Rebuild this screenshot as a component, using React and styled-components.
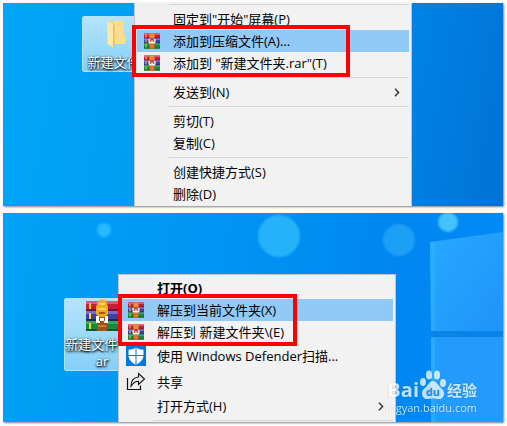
import React from "react";
import styled, { createGlobalStyle } from "styled-components";

export default function App() {
  return (
    <>
      <GlobalStyle />
      <Page>
        <Desktop $height={203}>
          <Shortcut $left={79} $top={13}>
            <ShortcutIcon>
              <FolderIcon />
            </ShortcutIcon>
            <ShortcutLabel>新建文件夹</ShortcutLabel>
          </Shortcut>
          <Menu role="menu" $left={131} $top={-5}>
            <Separator />
            <MenuItem label='固定到"开始"屏幕(P)' />
            <Marked $width={218} $offset={-5}>
              <MenuItem label="添加到压缩文件(A)..." icon={<RarIcon />} active />
              <MenuItem label='添加到 "新建文件夹.rar"(T)' icon={<RarIcon />} />
            </Marked>
            <Separator />
            <MenuItem label="发送到(N)" submenu />
            <Separator />
            <MenuItem label="剪切(T)" />
            <MenuItem label="复制(C)" />
            <Separator />
            <MenuItem label="创建快捷方式(S)" />
            <MenuItem label="删除(D)" />
            <Separator />
          </Menu>
        </Desktop>

        <Desktop $height={209}>
          <Wallpaper />
          <Shortcut $left={61} $top={85}>
            <ShortcutIcon>
              <RarIcon size={32} zipper />
            </ShortcutIcon>
            <ShortcutLabel>
              <span>新建文件夹.r</span>
              <span>ar</span>
            </ShortcutLabel>
          </Shortcut>
          <Menu role="menu" $left={115} $top={61}>
            <MenuItem label="打开(O)" bold />
            <Marked $width={179} $offset={-3}>
              <MenuItem label="解压到当前文件夹(X)" icon={<RarIcon />} active />
              <MenuItem label="解压到 新建文件夹\(E)" icon={<RarIcon />} />
            </Marked>
            <MenuItem
              label="使用 Windows Defender扫描..."
              icon={<DefenderIcon />}
              tall
            />
            <MenuItem label="共享" icon={<ShareIcon />} tall />
            <MenuItem label="打开方式(H)" submenu />
            <Separator />
          </Menu>
          <Watermark>
            <Brand>
              <span>Bai</span>
              <PawIcon />
              <small>经验</small>
            </Brand>
            <Site>jingyan.baidu.com</Site>
          </Watermark>
        </Desktop>
      </Page>
    </>
  );
}

function MenuItem({ label, icon, active, bold, tall, submenu }) {
  return (
    <Item role="menuitem" type="button" $active={active} $bold={bold} $tall={tall}>
      <Gutter>{icon}</Gutter>
      <Label>{label}</Label>
      {submenu && (
        <svg width="6" height="9" viewBox="0 0 6 9" fill="none">
          <path d="M1 .8 4.6 4.5 1 8.2" stroke="#333" strokeWidth="1.4" />
        </svg>
      )}
    </Item>
  );
}

function FolderIcon() {
  return (
    <svg width="32" height="32" viewBox="0 0 32 32">
      <path d="M4 3h15.500v13l2 2v8H9z" fill="#f3cf72" />
      <path d="M10 3h9.500v13l2 2v8H10z" fill="#fbdd8c" />
      <path d="M3.500 3 10 6v24l-6.500-4z" fill="#ffe9a6" />
      <path d="M9 7v23l1.500-1V6z" fill="#e6bd5c" />
    </svg>
  );
}

function RarIcon({ size = 16, zipper }) {
  return (
    <svg width={size} height={size} viewBox="0 0 32 32">
      <rect y="1" width="32" height="10" fill="#c41e3f" />
      <rect y="1" width="32" height="3" fill="#e0566e" />
      <rect y="9" width="32" height="2" fill="#7c1029" />
      <rect y="11" width="32" height="10" fill="#4340a3" />
      <rect y="11" width="32" height="3" fill="#6d70cf" />
      <rect y="19" width="32" height="2" fill="#262261" />
      <rect y="21" width="32" height="10" fill="#168a43" />
      <rect y="21" width="32" height="3" fill="#35a955" />
      <rect y="29" width="32" height="2" fill="#0b5a2a" />
      <path d="M3 3h2v6H3zm0 10h2v6H3zm0 10h2v6H3z" fill="#ffd51f" />
      {zipper ? (
        <>
          <rect x="11" y="1" width="10" height="30" fill="#a34f16" />
          <path d="M13 0h6l2 2v3l1 1v8l-3 3h-6l-3-3V6l1-1V2z" fill="#f2a91e" />
          <path d="M13 3h6v2h-6zm-1 5h8v2h-8z" fill="#ffdc64" />
          <path d="M13 12h6v2h-6z" fill="#9a5a10" />
          <path d="M10 16h3v5h1v-3h4v3h1v-5h3v7h-4v-2h-4v2h-4z" fill="#fff" />
          <path d="M12 25h8v2h-8z" fill="#cf7832" />
        </>
      ) : (
        <>
          <rect x="11" y="1" width="10" height="30" fill="#d95a20" />
          <rect x="11" y="1" width="10" height="9" fill="#f28a34" />
          <path d="M9 12h2.500v6h3v-4h3v4h3v-6H23v7l-2 2H11l-2-2z" fill="#fff" />
          <path d="M14 10h4v5h-4z" fill="#a34a50" />
          <rect x="12" y="23" width="8" height="8" fill="#e9702c" />
        </>
      )}
    </svg>
  );
}

function DefenderIcon() {
  return (
    <svg width="20" height="20" viewBox="0 0 20 20">
      <rect width="20" height="20" fill="#0078d7" />
      <path
        d="M10 1.500c2.200 1.700 4.800 2.200 7.500 2.200v5.300c0 4.600-3.200 7.600-7.500 9.800-4.300-2.200-7.500-5.200-7.500-9.800V3.700c2.700 0 5.300-.5 7.500-2.200z"
        fill="#fff"
      />
      <path d="M9.500 1h1v18h-1zM2 9h16v1H2z" fill="#0078d7" />
    </svg>
  );
}

function ShareIcon() {
  return (
    <svg width="20" height="20" viewBox="0 0 20 20" fill="none" stroke="#111">
      <path d="M1.500 6v11.500h13v-4" strokeWidth="1.200" />
      <path
        d="M12.500 1.500 18.500 7l-6 5.500v-3.200c-3.500 0-5.500 1.500-7.500 5 0-5 2.500-8.800 7.500-9.300z"
        strokeWidth="1.100"
      />
    </svg>
  );
}

function PawIcon() {
  return (
    <svg width="28" height="30" viewBox="0 0 28 30" fill="#fff">
      <ellipse cx="4" cy="12" rx="3" ry="4" />
      <ellipse cx="10" cy="5" rx="3" ry="4.500" />
      <ellipse cx="18" cy="5" rx="3" ry="4.500" />
      <ellipse cx="24" cy="13" rx="3" ry="4" />
      <path d="M14 11c3 0 4.500 3 6.500 5.500 2 2.200 4.500 3.500 4.500 7 0 3.500-2.500 5.500-5 5.500-2 0-3.500-.8-6-.8s-4 .8-6 .8c-2.500 0-5-2-5-5.500s2.500-4.800 4.500-7C9.500 14 11 11 14 11z" />
      <text
        x="14"
        y="26"
        textAnchor="middle"
        fontFamily="Open Sans, sans-serif"
        fontWeight="700"
        fontSize="11"
        fill="#1a8cec"
      >
        du
      </text>
    </svg>
  );
}

function Wallpaper() {
  return (
    <Backdrop viewBox="0 0 500 209" preserveAspectRatio="xMidYMid slice">
      <defs>
        <linearGradient id="pane" x1="0" y1="0" x2="1" y2="1">
          <stop offset="0" stopColor="#27a8ff" />
          <stop offset="1" stopColor="#1e94fa" />
        </linearGradient>
        <filter id="soft">
          <feGaussianBlur stdDeviation="1.200" />
        </filter>
      </defs>
      <g filter="url(#soft)">
        <circle cx="101" cy="17" r="7" fill="#25baff" />
        <circle cx="276" cy="23" r="21" fill="#27b2fa" />
        <circle cx="396" cy="27" r="16" fill="#1a9ff5" />
        <circle cx="445" cy="9" r="10" fill="#43c2ff" />
      </g>
      <path d="M427 29 500 19V118H428z" fill="url(#pane)" />
      <path d="M428 124H500V209H428z" fill="#239bfc" />
      <path d="M428 118H500V124H428z" fill="#0a83e8" />
      <path d="M427 29h5v89h-4zM428 124h4v85h-4z" fill="#2fb4fb" opacity=".6" />
    </Backdrop>
  );
}

const GlobalStyle = createGlobalStyle`
  *,
  *::after {
    box-sizing: border-box;
  }
  body {
    margin: 0;
    background: #fff;
    font-family: "Open Sans", "Noto Sans CJK SC", sans-serif;
    font-size: 13px;
  }
`;

const Page = styled.main`
  display: flex;
  flex-direction: column;
  gap: 7px;
  padding: 3px 4px 4px 3px;
`;

const Desktop = styled.section`
  position: relative;
  min-height: ${(p) => p.$height}px;
  overflow: hidden;
  background: linear-gradient(100deg, #00a6f7 0%, #009cf2 35%, #0084e8 75%, #0072d6 100%);
  box-shadow: 1px 1px 2px rgba(0, 0, 0, 0.5);
  & + & {
    background: linear-gradient(100deg, #00a2f6 0%, #0095f4 40%, #0086f0 75%, #008cfa 100%);
  }
`;

const Backdrop = styled.svg`
  position: absolute;
  inset: 0;
  width: 100%;
  height: 100%;
`;

const Shortcut = styled.div`
  position: absolute;
  left: ${(p) => p.$left}px;
  top: ${(p) => p.$top}px;
  display: flex;
  flex-direction: column;
  align-items: center;
  width: 76px;
  padding: 1px 0 0;
  border: 1px solid #b4e4fc;
  border-radius: 2px;
  background: linear-gradient(#b5e4fa, #84d0f8);
`;

const ShortcutIcon = styled.div`
  height: 36px;
`;

const ShortcutLabel = styled.div`
  display: flex;
  flex-direction: column;
  align-items: center;
  color: #fff;
  line-height: 17px;
  white-space: nowrap;
  text-shadow: 0 1px 2px #000, 1px 1px 3px #000;
`;

const Menu = styled.div`
  position: absolute;
  left: ${(p) => p.$left}px;
  top: ${(p) => p.$top}px;
  display: flex;
  flex-direction: column;
  width: 278px;
  padding: 2px;
  border: 1px solid #c4c4c4;
  background: linear-gradient(90deg, #efefef 34px, #f2f2f2 34px);
`;

const Item = styled.button`
  display: flex;
  align-items: center;
  width: 100%;
  height: ${(p) => (p.$tall ? 26 : 22)}px;
  padding: 0 9px 0 0;
  border: 0;
  background: ${(p) => (p.$active ? "#91c9f7" : "transparent")};
  color: #000;
  font: inherit;
  font-weight: ${(p) => (p.$bold ? 700 : 400)};
  text-align: left;
`;

const Gutter = styled.span`
  display: flex;
  flex: none;
  justify-content: center;
  width: 30px;
`;

const Label = styled.span`
  flex: 1;
  padding-left: 6px;
  line-height: 20px;
  white-space: nowrap;
`;

const Separator = styled.hr`
  width: calc(100% - 32px);
  height: 1px;
  margin: 3px 0 3px 32px;
  border: 0;
  background: #d5d5d5;
`;

const Marked = styled.div`
  position: relative;
  &::after {
    content: "";
    position: absolute;
    top: -5px;
    bottom: -3px;
    left: ${(p) => p.$offset}px;
    width: ${(p) => p.$width}px;
    border: 4px solid #fe0000;
    pointer-events: none;
  }
`;

const Watermark = styled.div`
  position: absolute;
  right: 26px;
  bottom: 6px;
  display: flex;
  flex-direction: column;
  align-items: flex-end;
  color: #fff;
  opacity: 0.75;
  text-shadow: 0 0 2px rgba(0, 0, 0, 0.25);
`;

const Brand = styled.div`
  display: flex;
  align-items: flex-end;
  height: 30px;
  font-size: 20px;
  font-weight: 700;
  line-height: 20px;
  small {
    font-size: 15px;
  }
`;

const Site = styled.div`
  font-size: 11px;
  line-height: 16px;
`;
